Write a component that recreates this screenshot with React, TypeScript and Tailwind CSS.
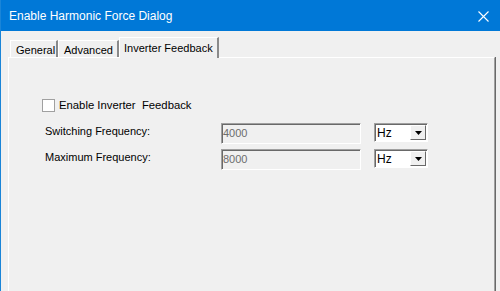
import React from 'react';

const tabs = [
  { name: 'General', w: 'w-[48px]' },
  { name: 'Advanced', w: 'w-[61px]' },
];

function TextField({ value }: { value: string }) {
  return (
    <div className="w-[140px] h-[21px] border border-[#a0a0a0] border-r-white border-b-white shadow-[inset_1px_1px_0_#696969] bg-[#f0f0f0] text-[#6d6d6d] text-[11px] leading-[13px] pl-[1px] pt-[3px]">
      {value}
    </div>
  );
}

function UnitSelect() {
  return (
    <div className="w-[54px] h-[19px] border border-[#a0a0a0] border-r-white border-b-white shadow-[inset_1px_1px_0_#696969] bg-white flex items-stretch pt-[1px] pl-[1px] pb-px pr-px">
      <div className="flex-1 text-[12px] leading-[15px] text-black pl-[1px] pt-[1px]">Hz</div>
      <div className="w-[16px] bg-[#f0f0f0] border border-white border-r-[#696969] border-b-[#696969] flex items-center justify-center">
        <svg width="7" height="4" viewBox="0 0 7 4">
          <path d="M0 0h7L3.5 4z" fill="#000" />
        </svg>
      </div>
    </div>
  );
}

export default function App() {
  return (
    <div className="w-[500px] h-[291px] overflow-hidden bg-[#f0f0f0] border-l border-[#1a85d8] font-['Liberation_Sans',Arial,sans-serif] text-[11px] text-black">
      {/* Title bar */}
      <div className="h-[31px] bg-[#0078d7] flex items-center justify-between pl-[8px] pr-[11px] text-white">
        <span className="text-[12px]">Enable Harmonic Force Dialog</span>
        <svg width="11" height="11" viewBox="0 0 11 11" className="mt-[1px]">
          <path d="M0.5 0.5l10 10M10.5 0.5l-10 10" stroke="#fff" strokeWidth="1.1" />
        </svg>
      </div>

      {/* Body */}
      <div className="pl-[7px] pt-[6px]">
        {/* Tabs */}
        <div className="relative z-10 flex items-end h-[20px] pl-[2px] whitespace-nowrap">
          {tabs.map((t) => (
            <div
              key={t.name}
              className={`${t.w} h-[17px] border-t border-l border-white border-r-2 border-r-[#8a8a8a] text-[11px] leading-[14px] pl-[5px] pt-[2px]`}
            >
              {t.name}
            </div>
          ))}
          <div className="w-[100px] h-[21px] -mb-px bg-[#f0f0f0] border-t border-l border-white border-r-2 border-r-[#8a8a8a] text-[11px] leading-[14px] pl-[4px] pt-[3px]">
            Inverter Feedback
          </div>
        </div>

        {/* Panel */}
        <div className="w-[487px] h-[240px] border-t border-l border-white border-r border-r-[#a0a0a0] shadow-[1px_0_0_#696969]">
          <div className="pt-[41px] pl-[33px]">
            <label className="flex items-center gap-[4px] h-[13px]">
              <span className="w-[13px] h-[13px] border border-[#a0a0a0] bg-white block" />
              <span className="text-[11.3px] leading-[13px] whitespace-pre">Enable Inverter  Feedback</span>
            </label>
          </div>

          <div className="pl-[36px] pt-[11px] flex flex-col gap-[5px]">
            <div className="flex items-start">
              <div className="w-[176px] text-[11px] leading-[13px] pt-[2px]">Switching Frequency:</div>
              <TextField value="4000" />
              <div className="ml-[13px]">
                <UnitSelect />
              </div>
            </div>
            <div className="flex items-start">
              <div className="w-[176px] text-[11px] leading-[13px] pt-[2px]">Maximum Frequency:</div>
              <TextField value="8000" />
              <div className="ml-[13px]">
                <UnitSelect />
              </div>
            </div>
          </div>
        </div>
      </div>
    </div>
  );
}
